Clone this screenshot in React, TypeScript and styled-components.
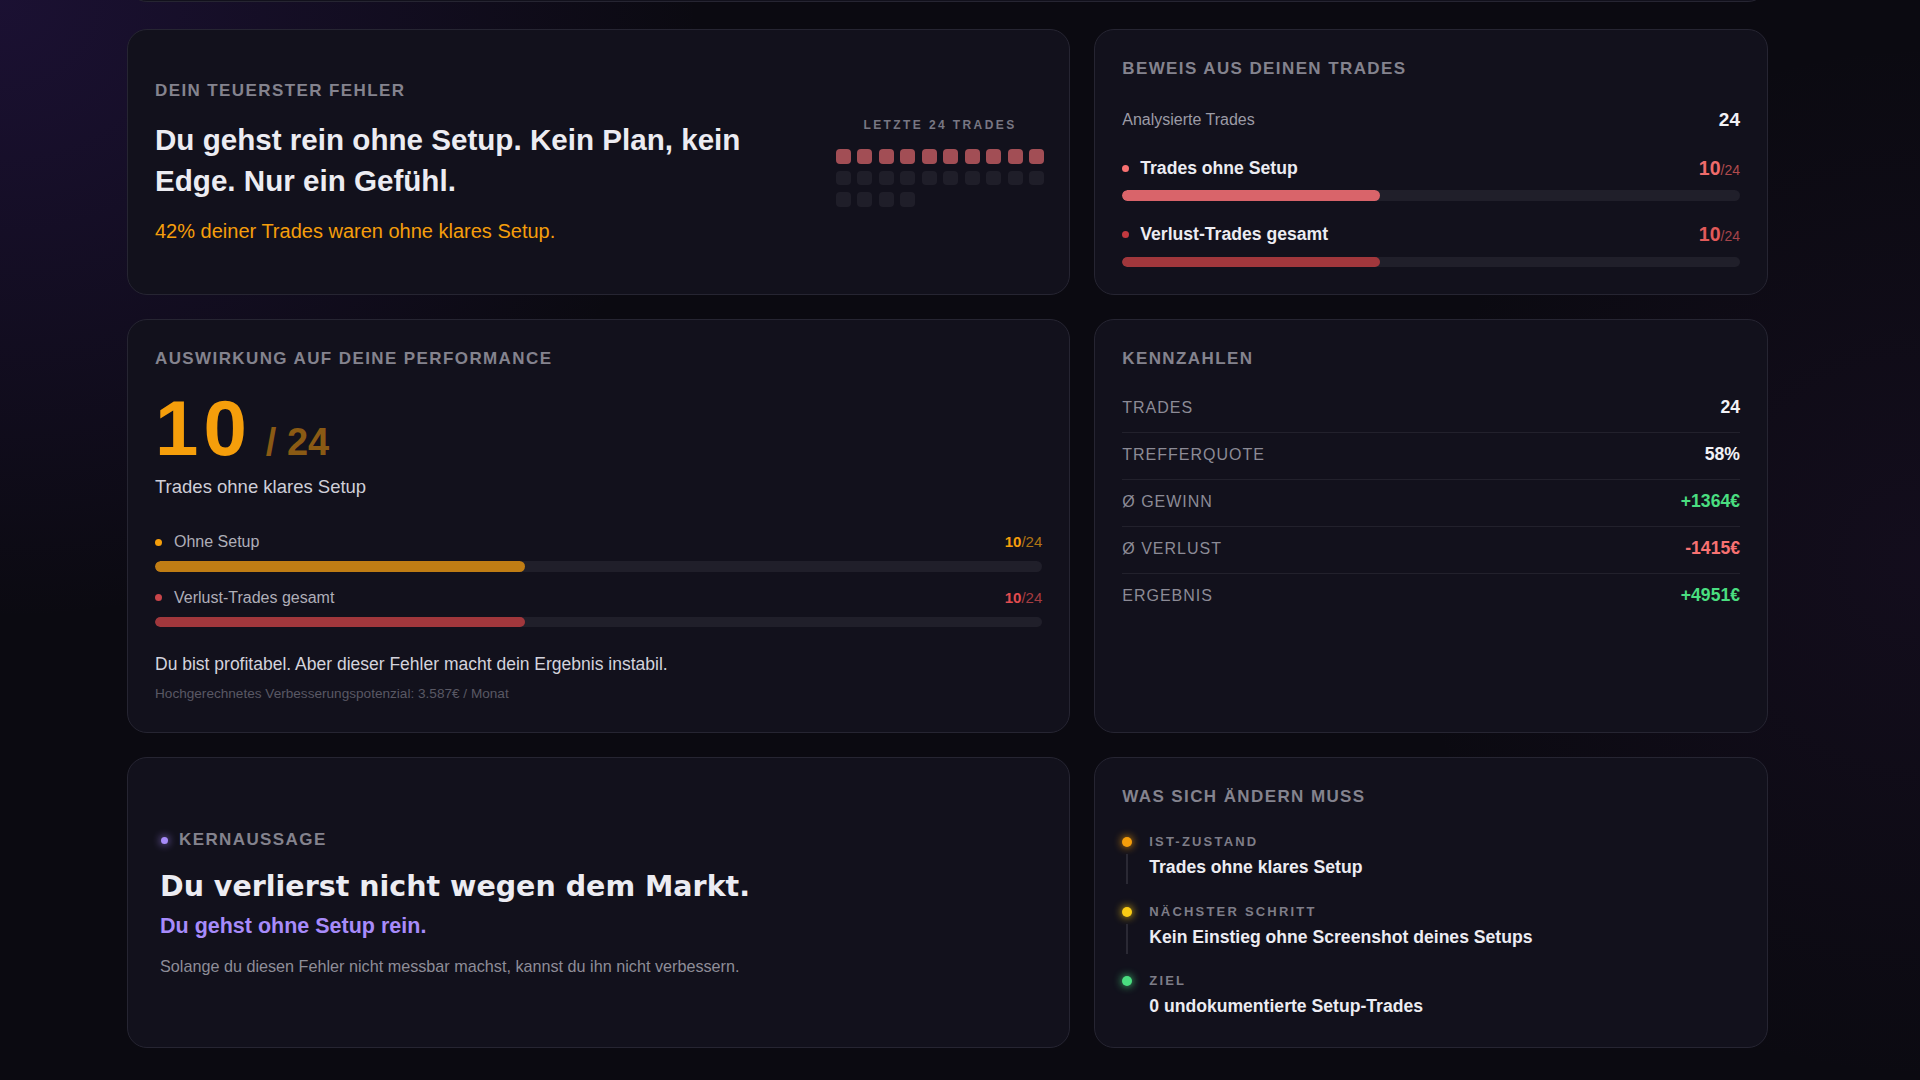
import React from 'react'
import styled, { createGlobalStyle } from 'styled-components'

const GlobalStyle = createGlobalStyle`
  *, *::before, *::after {
    box-sizing: border-box;
  }
  html, body {
    margin: 0;
    padding: 0;
  }
  body {
    width: 1920px;
    height: 1080px;
    overflow: hidden;
    background:
      radial-gradient(ellipse 700px 620px at 0% 0%, rgba(84, 40, 170, 0.22), transparent 100%),
      radial-gradient(ellipse 520px 520px at 100% 52%, rgba(90, 40, 130, 0.1), transparent 100%),
      #0b0a11;
    font-family: 'Liberation Sans', Arial, sans-serif;
    color: #ececf2;
  }
`

const Page = styled.div`
  padding: 0 152px 0 127px;
`

const PrevCard = styled.div`
  height: 40px;
  margin-top: -38px;
  background: #12111c;
  border: 1px solid #262532;
  border-radius: 20px;
`

const Grid = styled.div`
  display: grid;
  grid-template-columns: 7fr 5fr;
  gap: 24px;
  margin-top: 27px;
`

const Card = styled.section<{ $center?: boolean; $padX?: number; $padBottom?: number }>`
  display: flex;
  flex-direction: column;
  justify-content: ${p => (p.$center ? 'center' : 'flex-start')};
  padding: 28px ${p => p.$padX ?? 27}px ${p => p.$padBottom ?? 27}px;
  background: #12111c;
  border: 1px solid #262532;
  border-radius: 20px;
`

const SectionTitle = styled.h3`
  margin: 0;
  font-size: 17px;
  line-height: 22px;
  font-weight: 700;
  letter-spacing: 1.4px;
  text-transform: uppercase;
  color: #84838e;
`

/* ---------- teuerster Fehler ---------- */

const ErrorCard = styled(Card)`
  flex-direction: row;
  align-items: center;
  justify-content: space-between;
`

const ErrorText = styled.div`
  display: flex;
  flex-direction: column;
`

const Headline = styled.h2`
  max-width: 620px;
  margin: 18px 0 0;
  font-size: 29.6px;
  line-height: 40.7px;
  font-weight: 700;
  color: #ececf2;
`

const Highlight = styled.p`
  margin: 15px 0 0;
  font-size: 20px;
  line-height: 28px;
  color: #f59e0b;
`

const Recent = styled.div`
  display: flex;
  flex-direction: column;
  align-items: center;
  margin-right: -2px;
`

const MiniLabel = styled.div`
  font-size: 12px;
  line-height: 14px;
  font-weight: 700;
  letter-spacing: 2.4px;
  text-transform: uppercase;
  color: #787783;
`

const TradeGrid = styled.div`
  display: grid;
  grid-template-columns: repeat(10, 15px);
  grid-auto-rows: 14.5px;
  gap: 7px 6.5px;
  margin-top: 17px;
`

const TradeCell = styled.span<{ $bad: boolean }>`
  border-radius: 4px;
  background: ${p => (p.$bad ? '#a24e55' : '#1f1e29')};
`

/* ---------- Bars ---------- */

const Track = styled.div<{ $gap: number }>`
  height: 10.5px;
  margin-top: ${p => p.$gap}px;
  border-radius: 6px;
  background: #201f2a;
  overflow: hidden;
`

const Fill = styled.div<{ $color: string }>`
  height: 100%;
  border-radius: 6px;
  background: ${p => p.$color};
`

const Dot = styled.span<{ $color: string; $size?: number }>`
  flex: none;
  width: ${p => p.$size ?? 7}px;
  height: ${p => p.$size ?? 7}px;
  border-radius: 50%;
  background: ${p => p.$color};
`

/* ---------- Beweis ---------- */

const StatLine = styled.div`
  display: flex;
  align-items: center;
  justify-content: space-between;
  height: 24px;
  margin-top: 28px;
`

const StatLabel = styled.span`
  font-size: 16px;
  color: #9c9ba6;
`

const StatValue = styled.span`
  font-size: 19px;
  font-weight: 700;
  color: #f2f2f6;
`

const ProofRow = styled.div<{ $gap: number }>`
  margin-top: ${p => p.$gap}px;
`

const RowHead = styled.div`
  display: flex;
  align-items: center;
  justify-content: space-between;
  height: 24px;
`

const RowLabel = styled.span<{ $strong?: boolean }>`
  display: flex;
  align-items: center;
  gap: ${p => (p.$strong ? 11 : 12)}px;
  font-size: ${p => (p.$strong ? 17.6 : 16)}px;
  font-weight: ${p => (p.$strong ? 700 : 400)};
  color: ${p => (p.$strong ? '#ececf2' : '#afaeb8')};
`

const Ratio = styled.span<{ $color: string; $size: number }>`
  font-size: ${p => p.$size}px;
  font-weight: 700;
  color: ${p => p.$color};
`

const RatioTotal = styled.span<{ $color: string; $size: number }>`
  font-size: ${p => p.$size}px;
  color: ${p => p.$color};
`

/* ---------- Auswirkung ---------- */

const BigNumber = styled.div`
  display: flex;
  align-items: baseline;
  margin-top: 19px;
  line-height: 78px;
`

const BigValue = styled.span`
  font-size: 78px;
  font-weight: 700;
  letter-spacing: 5px;
  color: #f59e0b;
`

const BigTotal = styled.span`
  margin-left: 14px;
  font-size: 38px;
  line-height: 38px;
  font-weight: 700;
  color: #8a5a14;
`

const Caption = styled.div`
  margin-top: 8px;
  font-size: 18.5px;
  line-height: 24px;
  color: #cfced8;
`

const Breakdown = styled.div`
  margin-top: 33px;
`

const BreakRow = styled.div<{ $gap: number }>`
  margin-top: ${p => p.$gap}px;
`

const BreakHead = styled.div`
  display: flex;
  align-items: center;
  justify-content: space-between;
  height: 20px;
`

const Note = styled.p`
  margin: 26px 0 0;
  font-size: 17.5px;
  line-height: 22px;
  color: #d4d3dc;
`

const Fine = styled.p`
  margin: 10px 0 0;
  font-size: 13.6px;
  line-height: 18px;
  color: #595864;
`

/* ---------- Kennzahlen ---------- */

const MetricList = styled.div`
  margin-top: 16px;
`

const MetricRow = styled.div`
  display: flex;
  align-items: center;
  justify-content: space-between;
  padding: 11px 0 14px;
  line-height: 21px;
  border-bottom: 1px solid #22212c;

  &:last-child {
    border-bottom: none;
  }
`

const MetricLabel = styled.span`
  font-size: 16px;
  letter-spacing: 1px;
  text-transform: uppercase;
  color: #8c8b96;
`

const MetricValue = styled.span<{ $tone?: 'up' | 'down' }>`
  font-size: 17.6px;
  font-weight: 700;
  color: ${p => (p.$tone === 'up' ? '#4ade80' : p.$tone === 'down' ? '#f87171' : '#f2f2f6')};
`

/* ---------- Kernaussage ---------- */

const CoreLabel = styled.div`
  display: flex;
  align-items: center;
  gap: 11px;
  padding-left: 1px;
`

const GlowDot = styled(Dot)`
  box-shadow: 0 0 8px ${p => p.$color};
`

const CoreHeadline = styled.h2`
  margin: 18px 0 0;
  font-family: 'DejaVu Sans', sans-serif;
  font-size: 28.5px;
  line-height: 36px;
  font-weight: 700;
  color: #ececf2;
`

const CoreSub = styled.div`
  margin-top: 7px;
  font-size: 21.5px;
  line-height: 28px;
  font-weight: 700;
  color: #a78bfa;
`

const CoreBody = styled.p`
  margin: 15px 0 0;
  font-size: 16.2px;
  line-height: 22px;
  color: #8e8d98;
`

/* ---------- Was sich ändern muss ---------- */

const Steps = styled.div`
  display: flex;
  flex-direction: column;
  gap: 25.7px;
  margin-top: 26px;
`

const Step = styled.div`
  display: grid;
  grid-template-columns: 10px 1fr;
  column-gap: 17px;
`

const StepRail = styled.div`
  display: flex;
  flex-direction: column;
  align-items: center;
  padding-top: 3px;
`

const StepLine = styled.span`
  width: 2px;
  flex: 1;
  margin: 7px 0 -6px;
  background: #2a2934;
`

const StepLabel = styled.div`
  font-size: 13px;
  line-height: 16px;
  font-weight: 700;
  letter-spacing: 2.2px;
  text-transform: uppercase;
  color: #7e7d88;
`

const StepValue = styled.div`
  margin-top: 6px;
  font-size: 17.6px;
  line-height: 22px;
  font-weight: 700;
  color: #ececf2;
`

const trades = Array.from({ length: 24 }, (_, i) => i < 10)

const metrics: { label: string; value: string; tone?: 'up' | 'down' }[] = [
  { label: 'Trades', value: '24' },
  { label: 'Trefferquote', value: '58%' },
  { label: 'Ø Gewinn', value: '+1364€', tone: 'up' },
  { label: 'Ø Verlust', value: '-1415€', tone: 'down' },
  { label: 'Ergebnis', value: '+4951€', tone: 'up' },
]

const steps = [
  { label: 'Ist-Zustand', value: 'Trades ohne klares Setup', color: '#f59e0b' },
  { label: 'Nächster Schritt', value: 'Kein Einstieg ohne Screenshot deines Setups', color: '#facc15' },
  { label: 'Ziel', value: '0 undokumentierte Setup-Trades', color: '#4ade80' },
]

const pct = (n: number, total: number) => `${(n / total) * 100}%`

const App: React.FC = () => {
  return (
    <>
      <GlobalStyle />
      <Page>
        <PrevCard />
        <Grid>
          <ErrorCard>
            <ErrorText>
              <SectionTitle>Dein teuerster Fehler</SectionTitle>
              <Headline>Du gehst rein ohne Setup. Kein Plan, kein Edge. Nur ein Gefühl.</Headline>
              <Highlight>42% deiner Trades waren ohne klares Setup.</Highlight>
            </ErrorText>
            <Recent>
              <MiniLabel>Letzte 24 Trades</MiniLabel>
              <TradeGrid>
                {trades.map((bad, i) => (
                  <TradeCell key={i} $bad={bad} />
                ))}
              </TradeGrid>
            </Recent>
          </ErrorCard>

          <Card>
            <SectionTitle>Beweis aus deinen Trades</SectionTitle>
            <StatLine>
              <StatLabel>Analysierte Trades</StatLabel>
              <StatValue>24</StatValue>
            </StatLine>
            <ProofRow $gap={24}>
              <RowHead>
                <RowLabel $strong>
                  <Dot $color="#f87171" />
                  Trades ohne Setup
                </RowLabel>
                <span>
                  <Ratio $color="#ef6b6b" $size={19.5}>10</Ratio>
                  <RatioTotal $color="#b04b4d" $size={14}>/24</RatioTotal>
                </span>
              </RowHead>
              <Track $gap={10}>
                <Fill $color="#d9646a" style={{ width: pct(10, 24) }} />
              </Track>
            </ProofRow>
            <ProofRow $gap={22}>
              <RowHead>
                <RowLabel $strong>
                  <Dot $color="#c2393f" />
                  Verlust-Trades gesamt
                </RowLabel>
                <span>
                  <Ratio $color="#e25a5a" $size={19.5}>10</Ratio>
                  <RatioTotal $color="#a5444a" $size={14}>/24</RatioTotal>
                </span>
              </RowHead>
              <Track $gap={10}>
                <Fill $color="#a1373c" style={{ width: pct(10, 24) }} />
              </Track>
            </ProofRow>
          </Card>

          <Card $padBottom={29}>
            <SectionTitle>Auswirkung auf deine Performance</SectionTitle>
            <BigNumber>
              <BigValue>10</BigValue>
              <BigTotal>/ 24</BigTotal>
            </BigNumber>
            <Caption>Trades ohne klares Setup</Caption>
            <Breakdown>
              <BreakRow $gap={0}>
                <BreakHead>
                  <RowLabel>
                    <Dot $color="#f59e0b" />
                    Ohne Setup
                  </RowLabel>
                  <span>
                    <Ratio $color="#f59e0b" $size={15}>10</Ratio>
                    <RatioTotal $color="#b07414" $size={15}>/24</RatioTotal>
                  </span>
                </BreakHead>
                <Track $gap={9}>
                  <Fill $color="#c07d14" style={{ width: pct(10, 24) }} />
                </Track>
              </BreakRow>
              <BreakRow $gap={16}>
                <BreakHead>
                  <RowLabel>
                    <Dot $color="#c8454a" />
                    Verlust-Trades gesamt
                  </RowLabel>
                  <span>
                    <Ratio $color="#e14c4f" $size={15}>10</Ratio>
                    <RatioTotal $color="#a53c40" $size={15}>/24</RatioTotal>
                  </span>
                </BreakHead>
                <Track $gap={9}>
                  <Fill $color="#a1373c" style={{ width: pct(10, 24) }} />
                </Track>
              </BreakRow>
            </Breakdown>
            <Note>Du bist profitabel. Aber dieser Fehler macht dein Ergebnis instabil.</Note>
            <Fine>Hochgerechnetes Verbesserungspotenzial: 3.587€ / Monat</Fine>
          </Card>

          <Card>
            <SectionTitle>Kennzahlen</SectionTitle>
            <MetricList>
              {metrics.map(m => (
                <MetricRow key={m.label}>
                  <MetricLabel>{m.label}</MetricLabel>
                  <MetricValue $tone={m.tone}>{m.value}</MetricValue>
                </MetricRow>
              ))}
            </MetricList>
          </Card>

          <Card $center $padX={32}>
            <CoreLabel>
              <GlowDot $color="#a78bfa" />
              <SectionTitle>Kernaussage</SectionTitle>
            </CoreLabel>
            <CoreHeadline>Du verlierst nicht wegen dem Markt.</CoreHeadline>
            <CoreSub>Du gehst ohne Setup rein.</CoreSub>
            <CoreBody>Solange du diesen Fehler nicht messbar machst, kannst du ihn nicht verbessern.</CoreBody>
          </Card>

          <Card $padBottom={30}>
            <SectionTitle>Was sich ändern muss</SectionTitle>
            <Steps>
              {steps.map((s, i) => (
                <Step key={s.label}>
                  <StepRail>
                    <GlowDot $color={s.color} $size={10} />
                    {i < steps.length - 1 && <StepLine />}
                  </StepRail>
                  <div>
                    <StepLabel>{s.label}</StepLabel>
                    <StepValue>{s.value}</StepValue>
                  </div>
                </Step>
              ))}
            </Steps>
          </Card>
        </Grid>
      </Page>
    </>
  )
}

export default App
